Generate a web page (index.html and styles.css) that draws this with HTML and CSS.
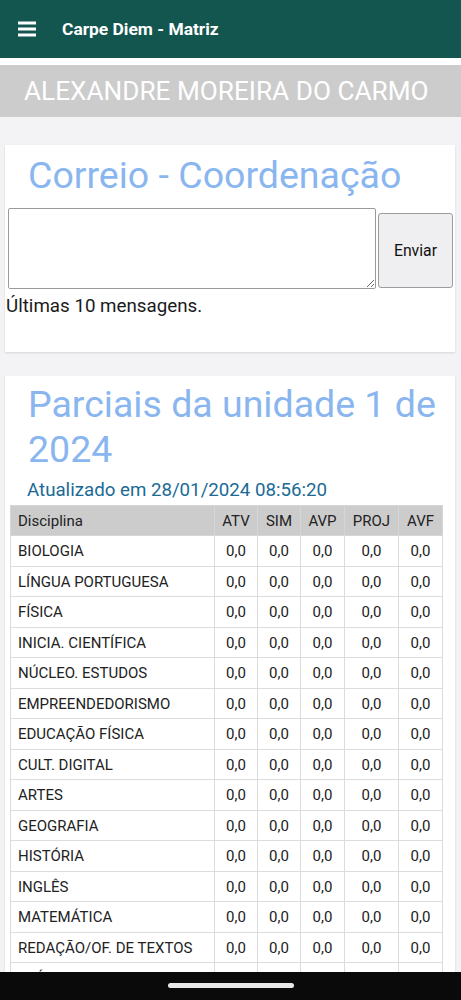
FILE: index.html
```html
<!DOCTYPE html>
<html lang="pt-BR">
<head>
<meta charset="utf-8">
<title>Carpe Diem - Matriz</title>
<link rel="stylesheet" href="styles.css">
</head>
<body>
<header class="appbar">
  <svg class="menu-icon" width="18" height="16" viewBox="0 0 18 16" aria-hidden="true">
    <rect x="0" y="0.5" width="18" height="3" fill="#fff"/>
    <rect x="0" y="6.5" width="18" height="3" fill="#fff"/>
    <rect x="0" y="12.5" width="18" height="3" fill="#fff"/>
  </svg>
  <span class="appbar-title">Carpe Diem - Matriz</span>
</header>
<div class="userbar-wrap">
  <div class="userbar">ALEXANDRE MOREIRA DO CARMO</div>
</div>
<main class="content">
  <section class="card card-mail">
    <h2 class="card-title">Correio - Coordenação</h2>
    <div class="mail-form">
      <textarea class="mail-text"></textarea>
      <button class="mail-send">Enviar</button>
    </div>
    <p class="mail-note">Últimas 10 mensagens.</p>
  </section>
  <section class="card card-grades">
    <h2 class="card-title">Parciais da unidade 1 de 2024</h2>
    <p class="updated">Atualizado em 28/01/2024 08:56:20</p>
    <table class="grades">
      <thead>
        <tr><th class="col-name">Disciplina</th><th class="c-atv">ATV</th><th class="c-sim">SIM</th><th class="c-avp">AVP</th><th class="c-proj">PROJ</th><th class="c-avf">AVF</th></tr>
      </thead>
      <tbody>
        <tr><td class="col-name">BIOLOGIA</td><td>0,0</td><td>0,0</td><td>0,0</td><td>0,0</td><td>0,0</td></tr>
        <tr><td class="col-name">LÍNGUA PORTUGUESA</td><td>0,0</td><td>0,0</td><td>0,0</td><td>0,0</td><td>0,0</td></tr>
        <tr><td class="col-name">FÍSICA</td><td>0,0</td><td>0,0</td><td>0,0</td><td>0,0</td><td>0,0</td></tr>
        <tr><td class="col-name">INICIA. CIENTÍFICA</td><td>0,0</td><td>0,0</td><td>0,0</td><td>0,0</td><td>0,0</td></tr>
        <tr><td class="col-name">NÚCLEO. ESTUDOS</td><td>0,0</td><td>0,0</td><td>0,0</td><td>0,0</td><td>0,0</td></tr>
        <tr><td class="col-name">EMPREENDEDORISMO</td><td>0,0</td><td>0,0</td><td>0,0</td><td>0,0</td><td>0,0</td></tr>
        <tr><td class="col-name">EDUCAÇÃO FÍSICA</td><td>0,0</td><td>0,0</td><td>0,0</td><td>0,0</td><td>0,0</td></tr>
        <tr><td class="col-name">CULT. DIGITAL</td><td>0,0</td><td>0,0</td><td>0,0</td><td>0,0</td><td>0,0</td></tr>
        <tr><td class="col-name">ARTES</td><td>0,0</td><td>0,0</td><td>0,0</td><td>0,0</td><td>0,0</td></tr>
        <tr><td class="col-name">GEOGRAFIA</td><td>0,0</td><td>0,0</td><td>0,0</td><td>0,0</td><td>0,0</td></tr>
        <tr><td class="col-name">HISTÓRIA</td><td>0,0</td><td>0,0</td><td>0,0</td><td>0,0</td><td>0,0</td></tr>
        <tr><td class="col-name">INGLÊS</td><td>0,0</td><td>0,0</td><td>0,0</td><td>0,0</td><td>0,0</td></tr>
        <tr><td class="col-name">MATEMÁTICA</td><td>0,0</td><td>0,0</td><td>0,0</td><td>0,0</td><td>0,0</td></tr>
        <tr><td class="col-name">REDAÇÃO/OF. DE TEXTOS</td><td>0,0</td><td>0,0</td><td>0,0</td><td>0,0</td><td>0,0</td></tr>
        <tr><td class="col-name">QUÍMICA</td><td>0,0</td><td>0,0</td><td>0,0</td><td>0,0</td><td>0,0</td></tr>
      </tbody>
    </table>
  </section>
</main>
<div class="navbar"><span class="nav-pill"></span></div>
</body>
</html>
```
FILE: styles.css
```css
* { box-sizing: border-box; }
html, body {
  margin: 0;
  padding: 0;
  background: #f3f3f5;
  font-family: Roboto, "Noto Sans", sans-serif;
  color: #1a1a1a;
}
.appbar {
  height: 58px;
  background: #13564f;
  display: flex;
  align-items: center;
  padding-left: 18px;
}
.menu-icon { display: block; }
.appbar-title {
  margin-left: 26px;
  color: #fff;
  font-weight: 700;
  font-size: 17.4px;
}
.userbar-wrap {
  background: #fff;
  padding-top: 7px;
}
.userbar {
  height: 52px;
  background: #cccccc;
  color: #fff;
  font-size: 26.2px;
  line-height: 52px;
  padding-left: 24px;
  white-space: nowrap;
}
.content {
  padding: 28px 6px 40px 5px;
  display: flex;
  flex-direction: column;
  gap: 24px;
}
.card {
  background: #fff;
  box-shadow: 0 1px 2px rgba(0,0,0,0.12);
}
.card-title {
  margin: 0;
  padding: 8px 0 0 23px;
  font-size: 37.5px;
  line-height: 45px;
  font-weight: 400;
  color: #8ab6f0;
}
.mail-form {
  display: flex;
  align-items: flex-start;
  margin-top: 10px;
  padding-left: 3px;
}
.mail-text {
  width: 368px;
  height: 81px;
  border: 1px solid #9a9a9a;
  border-radius: 2px;
  margin: 0;
  resize: vertical;
}
.mail-send {
  margin: 5px 0 0 2px;
  width: 75px;
  height: 75px;
  background: #efeef0;
  border: 1px solid #9c9c9c;
  border-radius: 3px;
  font-family: Roboto, sans-serif;
  font-size: 15.8px;
  color: #111;
}
.mail-note {
  margin: 6px 0 0 1px;
  padding-bottom: 34px;
  font-size: 18.75px;
  line-height: 1.2;
}
.card-grades .card-title { padding-top: 6px; }
.updated {
  margin: 7px 0 0 22px;
  font-size: 18.7px;
  line-height: 1.2;
  color: #1b6a95;
}
.grades {
  margin: 4px 0 0 5px;
  border-collapse: collapse;
  width: 432px;
  font-size: 15px;
  table-layout: fixed;
}
.grades th, .grades td {
  border: 1px solid #dcdcdc;
  height: 30.5px;
  padding: 0;
  text-align: center;
  font-weight: 400;
  white-space: nowrap;
}
.grades th {
  background: #cccccc;
  border-color: #d6d6d6;
  color: #222;
}
.grades td { color: #222; }
.grades .col-name {
  width: 204px;
  text-align: left;
  padding-left: 7px;
}
.c-atv, .c-sim { width: 43px; }
.c-avp { width: 44px; }
.c-proj { width: 54px; }
.c-avf { width: 44px; }
.navbar {
  position: fixed;
  left: 0;
  right: 0;
  bottom: 0;
  height: 28px;
  background: #0a0a0a;
  display: flex;
  justify-content: center;
  padding-top: 11px;
}
.nav-pill {
  width: 126px;
  height: 5px;
  border-radius: 3px;
  background: #e8e8e8;
}
```
